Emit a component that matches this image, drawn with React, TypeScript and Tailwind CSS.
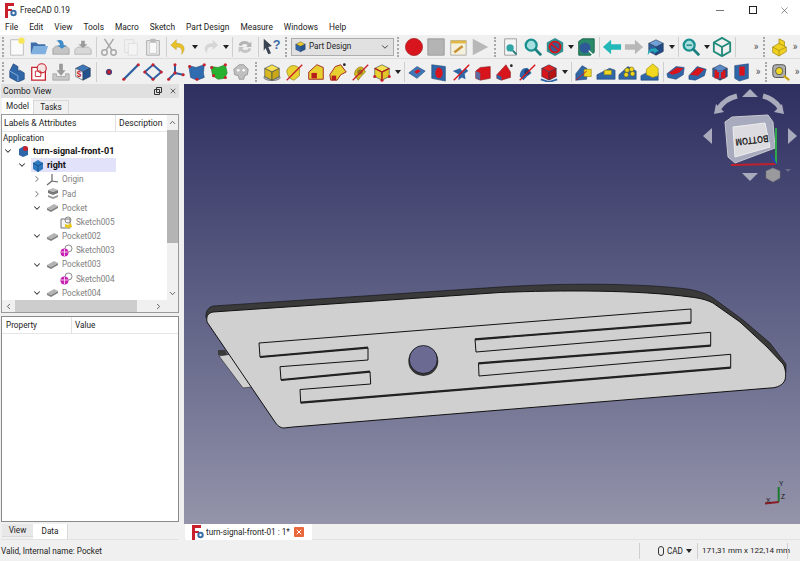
import React from "react";
import { ChevronDown, ChevronLeft, ChevronRight, ChevronUp, X } from "lucide-react";

type Kids = { children?: React.ReactNode };

const Ico = ({ children }: Kids) => (
  <div className="flex h-[22px] w-[22px] shrink-0 items-center justify-center">
    <svg width="20" height="20" viewBox="0 0 22 22">
      {children}
    </svg>
  </div>
);

const Iso = ({ a, b, c }: { a: string; b: string; c: string }) => (
  <g stroke="#23334f" strokeWidth="0.6" strokeLinejoin="round">
    <polygon points="3,7 11,3 19,7 11,11" fill={a} />
    <polygon points="3,7 11,11 11,20 3,16" fill={b} />
    <polygon points="19,7 11,11 11,20 19,16" fill={c} />
  </g>
);

const Dots = ({ pts }: { pts: number[][] }) => (
  <>
    {pts.map(([x, y]) => (
      <circle key={`${x}-${y}`} cx={x} cy={y} r="1.7" fill="#c8202c" />
    ))}
  </>
);

const Drop = () => (
  <div className="flex h-[22px] w-[9px] shrink-0 items-center justify-center">
    <div className="h-0 w-0 border-x-[3px] border-t-[4px] border-x-transparent border-t-[#222]" />
  </div>
);

const Sep = () => <div className="mx-[1.5px] h-[20px] w-px shrink-0 bg-[#cfcfcf]" />;

const Handle = () => (
  <div className="mx-[3px] h-[20px] w-[3px] shrink-0 border-l-2 border-dotted border-[#a8a8a8]" />
);

const FirstHandle = () => (
  <div className="ml-[2px] mr-[2px] h-[20px] w-[2px] shrink-0 border-l-2 border-dotted border-[#a8a8a8]" />
);

const More = () => (
  <span className="flex w-[10px] shrink-0 justify-center text-[10px] leading-none text-[#555]">»</span>
);

const FcLogo = () => (
  <svg width="13" height="15" viewBox="0 0 13 15" className="shrink-0">
    <path d="M0 0h9v3H3v3h4v2H3v7H0z" fill="#c8202c" />
    <circle cx="8.5" cy="10" r="3.2" fill="#3a6ea5" />
    <circle cx="8.5" cy="10" r="1.2" fill="#fff" />
  </svg>
);

const Row1Left = () => (
  <>
    <Ico>
      <path d="M4 3h12l2 2v15H4z" fill="#fafafa" stroke="#bbb" />
      <circle cx="16" cy="4" r="3.5" fill="#f6e65a" />
    </Ico>
    <Ico>
      <path d="M2 6h6l2 2h8v10H2z" fill="#3f6ea8" />
      <path d="M5 10h16l-3 9H2z" fill="#7fb0e0" />
    </Ico>
    <Ico>
      <path d="M2 13l3-3h12l3 3v6H2z" fill="#c4c4c4" stroke="#888" strokeWidth=".6" />
      <path d="M6 4c6-2 8 1 8 5h3l-5 4-5-4h3c0-2-2-4-4-5z" fill="#3f8cc8" />
    </Ico>
    <Ico>
      <path d="M2 14l3-3h12l3 3v5H2z" fill="#d8d8d8" stroke="#999" strokeWidth=".6" />
      <path d="M9 4h4v4h3l-5 4-5-4h3z" fill="#9a9a9a" />
    </Ico>
    <Sep />
    <Ico>
      <g stroke="#a8a8a8" strokeWidth="1.6" fill="none">
        <path d="M6 2l8 12M16 2L8 14" />
        <circle cx="6" cy="17" r="3" />
        <circle cx="16" cy="17" r="3" />
      </g>
    </Ico>
    <Ico>
      <path d="M4 3h10v14H4z" fill="#f2f2f2" stroke="#ddd" />
      <path d="M8 7h10v13H8z" fill="#f4f4f4" stroke="#ddd" />
    </Ico>
    <Ico>
      <path d="M4 4h14v16H4z" fill="#e8e8e8" stroke="#aaa" />
      <path d="M7 6h8v12H7z" fill="#f8f8f8" stroke="#ccc" />
      <path d="M8 2h6v4H8z" fill="#bbb" />
    </Ico>
    <Sep />
    <Ico>
      <path d="M8 3L2 9l6 5v-3c5 0 7 2 6 8 5-6 3-12-6-12z" fill="#e8c028" stroke="#b89a20" strokeWidth=".5" />
    </Ico>
    <Drop />
    <Ico>
      <path d="M14 3l6 6-6 5v-3c-5 0-7 2-6 8-5-6-3-12 6-12z" fill="#d6d6d6" />
    </Ico>
    <Drop />
    <Sep />
    <Ico>
      <path d="M4 9c1-5 9-6 12-2l2-2v6h-6l2-2c-2-2-6-2-7 1z" fill="#b4b4b4" />
      <path d="M18 13c-1 5-9 6-12 2l-2 2v-6h6l-2 2c2 2 6 2 7-1z" fill="#c4c4c4" />
    </Ico>
    <Sep />
    <Ico>
      <path d="M3 2l9 8-4 1 3 7-3 1-3-7-2 3z" fill="#3a4452" />
      <text x="13" y="13" fontSize="14" fontWeight="700" fill="#3f6ea8" fontFamily="Liberation Sans">?</text>
    </Ico>
  </>
);

const Row1Mid = () => (
  <>
    <Ico>
      <circle cx="11" cy="11" r="9.5" fill="#d8141c" stroke="#8a1a1a" strokeWidth=".6" />
    </Ico>
    <Ico>
      <path d="M2 2h18v18H2z" fill="#b4b4b4" stroke="#999" />
    </Ico>
    <Ico>
      <path d="M3 4h17v16H3z" fill="#f4f0dc" stroke="#aaa" />
      <path d="M3 4h17v3H3z" fill="#e0b840" />
      <path d="M6 16l9-7 2 2-9 7z" fill="#c89030" />
    </Ico>
    <Ico>
      <path d="M3 2l17 9-17 9z" fill="#b8b8b8" />
    </Ico>
    <Handle />
    <Ico>
      <path d="M4 2h13v18H4z" fill="#f4f4f4" stroke="#999" />
      <circle cx="10" cy="12" r="4" fill="#2fa5a5" />
      <path d="M13 15l4 4" stroke="#1c7878" strokeWidth="2" />
    </Ico>
    <Ico>
      <circle cx="9" cy="9" r="6" fill="#a8e0e0" stroke="#1c9090" strokeWidth="2.5" />
      <path d="M13 13l7 7" stroke="#1c8080" strokeWidth="3" />
    </Ico>
    <Ico>
      <polygon points="11,1 20,6 20,16 11,21 2,16 2,6" fill="#2f8f8f" />
      <circle cx="11" cy="11" r="6" fill="#3a5a90" stroke="#d8141c" strokeWidth="2" />
      <path d="M6 7l10 8" stroke="#d8141c" strokeWidth="2" />
    </Ico>
    <Drop />
    <Ico>
      <path d="M3 5l4-3h13v15l-4 3H3z" fill="#2a8a6a" stroke="#156045" />
      <circle cx="10" cy="12" r="6" fill="#2f5a98" />
      <path d="M14 15l5 5" stroke="#fff" strokeWidth="1.5" />
    </Ico>
    <Sep />
    <Ico>
      <path d="M1 11l9-8v5h11v6H10v5z" fill="#22b8b8" />
    </Ico>
    <Ico>
      <path d="M21 11l-9-8v5H1v6h11v5z" fill="#b8b8b8" />
    </Ico>
    <Ico>
      <Iso a="#6fa0d8" b="#2f5f9f" c="#1f4a85" />
      <path d="M2 20c0-6 3-8 8-7l-1-2 5 4-5 3v-2c-3-1-5 0-7 4z" fill="#22a8b8" />
    </Ico>
    <Drop />
    <Sep />
    <Ico>
      <circle cx="9" cy="9" r="6" fill="#a8e0e0" stroke="#1c9090" strokeWidth="2.5" />
      <path d="M6 9h6" stroke="#1c8080" strokeWidth="1.5" />
      <path d="M13 13l7 7" stroke="#1c8080" strokeWidth="3" />
    </Ico>
    <Drop />
    <Ico>
      <g fill="none" stroke="#1f8a7a" strokeWidth="2" strokeLinejoin="round">
        <polygon points="11,1 20,6 20,16 11,21 2,16 2,6" />
        <path d="M2 6l9 5 9-5M11 11v10" />
      </g>
    </Ico>
    <Sep />
  </>
);

const Yellow = () => (
  <Ico>
    <path d="M4 11l7-4V2l6 3v5l2 1v5l-8 5-7-4z" fill="#f0d020" stroke="#a08a10" strokeWidth=".8" />
    <path d="M11 7l6 3M4 11l7 4v6M11 15l8-4" stroke="#a08a10" strokeWidth=".8" fill="none" />
  </Ico>
);

const Row2Left = () => (
  <>
    <Ico>
      <path d="M3 10l4-8 5 3v5l2-1 5 3v7l-7 3-9-5z" fill="#2f66a8" stroke="#1c3f70" strokeWidth=".7" />
      <path d="M3 10l9 5v6" stroke="#8cb4e0" fill="none" />
    </Ico>
    <Ico>
      <path d="M3 6h15v14H3z" fill="#fff" stroke="#c8202c" strokeWidth="1.4" />
      <circle cx="14" cy="7" r="5" fill="#f4e4e4" stroke="#c8202c" strokeWidth="1.2" />
      <path d="M7 10h6v6H7z" fill="none" stroke="#c8202c" />
    </Ico>
    <Ico>
      <path d="M2 13h4v3h10v-3h4v7H2z" fill="#c8c8c8" stroke="#888" strokeWidth=".6" />
      <path d="M9 2h4v7h3l-5 6-5-6h3z" fill="#9a9a9a" />
    </Ico>
    <Ico>
      <Iso a="#3f78b8" b="#f4f4f4" c="#24528f" />
      <text x="4" y="17" fontSize="9" fontWeight="700" fill="#c8202c" fontFamily="Liberation Sans">$</text>
    </Ico>
    <Sep />
    <Ico>
      <circle cx="11" cy="11" r="3" fill="#b0203a" stroke="#2b4a86" />
    </Ico>
    <Ico>
      <path d="M3 19L19 3" stroke="#2f5fa0" strokeWidth="2.5" />
      <Dots pts={[[3, 19], [19, 3]]} />
    </Ico>
    <Ico>
      <polygon points="11,3 20,11 11,19 2,11" fill="none" stroke="#2f5fa0" strokeWidth="2.2" />
      <Dots pts={[[11, 3], [20, 11], [11, 19], [2, 11]]} />
    </Ico>
    <Ico>
      <path d="M11 3v9M11 12l9 2M11 12l-7 7" stroke="#2f5fa0" strokeWidth="2.2" fill="none" />
      <Dots pts={[[11, 3], [20, 14], [4, 19], [11, 12]]} />
    </Ico>
    <Ico>
      <path d="M2 4l8 2 9-3-1 9 1 5-8 3-7-3z" fill="#2f6cb0" stroke="#1c3f70" strokeWidth=".6" />
      <Dots pts={[[3, 5], [19, 3], [11, 19]]} />
    </Ico>
    <Ico>
      <path d="M2 5l8 1 8-3 2 9-3 6-7 1-6-4z" fill="#28b030" stroke="#157018" strokeWidth=".6" />
      <Dots pts={[[3, 6], [18, 3], [5, 15], [18, 17]]} />
    </Ico>
    <Ico>
      <path d="M3 8l6-5h5l5 5-1 6-3 1-1 4H9l-1-4-4-1z" fill="#c0c0c0" stroke="#8a8a8a" strokeWidth=".8" />
      <circle cx="8" cy="9" r="1.4" fill="#fff" />
      <circle cx="14" cy="9" r="1.4" fill="#fff" />
    </Ico>
    <Handle />
  </>
);

const Row2Part = () => (
  <>
    <Ico>
      <ellipse cx="11" cy="17" rx="9" ry="3.5" fill="#a8a8a8" stroke="#555" strokeWidth=".6" />
      <Iso a="#f4e050" b="#d8b820" c="#c8a818" />
    </Ico>
    <Ico>
      <path d="M3 10c2-7 9-8 14-3v8l-6 5C6 19 4 15 3 10z" fill="#e8d030" stroke="#8a7a10" strokeWidth=".7" />
      <path d="M3 20L20 3" stroke="#c8202c" strokeWidth="1.5" />
    </Ico>
    <Ico>
      <path d="M3 11l9-8 7 3v13H3z" fill="#e8d030" stroke="#a02020" />
      <path d="M6 12h6v6H6z" fill="#b81c1c" />
    </Ico>
    <Ico>
      <path d="M2 14l6-9 6-2 6 8-6 3-4 6H3z" fill="#e8d030" stroke="#a02020" />
      <path d="M4 15h5v5H4z" fill="#b81c1c" />
      <circle cx="18" cy="3" r="1.5" fill="#222" />
    </Ico>
    <Ico>
      <path d="M5 14c0-6 5-10 9-8l3 5-5 5-3 4z" fill="#d8b820" stroke="#7a6a10" strokeWidth=".7" />
      <circle cx="11" cy="11" r="3" fill="#8a7a20" />
      <path d="M3 20L20 3" stroke="#c8202c" strokeWidth="1.5" />
    </Ico>
    <Ico>
      <Iso a="#f4e050" b="#e8d030" c="#e0c428" />
      <path d="M11 11v9M3 7l8 4 8-4" stroke="#b81c1c" strokeWidth="1.3" fill="none" />
      <Dots pts={[[3, 16], [19, 16], [11, 20]]} />
    </Ico>
    <Drop />
    <Sep />
    <Ico>
      <path d="M2 12l9-7 9 5-9 8z" fill="#3f78b8" stroke="#1c3f70" strokeWidth=".6" />
      <path d="M8 11l4-3 3 2-4 3z" fill="#d8141c" />
    </Ico>
    <Ico>
      <path d="M3 3l15 2v16L3 18z" fill="#2f66a8" stroke="#1c3f70" strokeWidth=".6" />
      <ellipse cx="11" cy="12" rx="4" ry="6" fill="#d8141c" />
    </Ico>
    <Ico>
      <path d="M2 10l8-3 3 4 3-4 3 3-4 3 1 6-4-2-4 3 1-6z" fill="#2f66a8" />
      <path d="M3 20L20 3" stroke="#d8141c" strokeWidth="1.5" />
    </Ico>
    <Ico>
      <path d="M3 10l5-4 11-1v13L8 20l-5-2z" fill="#d8141c" stroke="#802020" strokeWidth=".6" />
      <path d="M3 10l5 2v8l-5-2z" fill="#5a6aa0" />
    </Ico>
    <Ico>
      <path d="M2 14l10-11 5 8v6L7 20l-5-2z" fill="#d8141c" stroke="#802020" strokeWidth=".6" />
      <path d="M2 14l5 2v4l-5-2z" fill="#2f66a8" />
      <circle cx="18" cy="4" r="1.5" fill="#222" />
    </Ico>
    <Ico>
      <path d="M3 16c0-7 5-11 9-9l4 5-5 4-4 4z" fill="#2f66a8" />
      <circle cx="11" cy="11" r="3" fill="#1c3f70" />
      <path d="M3 20L20 3" stroke="#d8141c" strokeWidth="1.5" />
    </Ico>
    <Ico>
      <Iso a="#e02020" b="#d8141c" c="#b81414" />
      <path d="M2 19l9 3 9-3" stroke="#2f66a8" strokeWidth="2" fill="none" />
    </Ico>
    <Drop />
    <Sep />
    <Ico>
      <path d="M2 13l7-9 5 3v12l-12 1z" fill="#2f66a8" stroke="#1c3f70" strokeWidth=".6" />
      <path d="M11 8h8v8h-8z" fill="#f0d820" stroke="#8a7a10" strokeWidth=".6" />
      <path d="M2 20L14 10" stroke="#d8141c" />
    </Ico>
    <Ico>
      <path d="M1 14l14-7 6 2v10H1z" fill="#2f66a8" stroke="#1c3f70" strokeWidth=".6" />
      <path d="M9 9h8v5H9z" fill="#f0d820" stroke="#8a7a10" strokeWidth=".6" />
    </Ico>
    <Ico>
      <path d="M1 14l10-9 9 5v9H1z" fill="#2f66a8" stroke="#1c3f70" strokeWidth=".6" />
      <g fill="#f0d820" stroke="#6a5a10" strokeWidth=".6">
        <circle cx="10" cy="9" r="2.5" />
        <circle cx="15" cy="8" r="2.5" />
        <circle cx="16" cy="13" r="2.5" />
        <circle cx="9" cy="14" r="2.5" />
      </g>
    </Ico>
    <Ico>
      <path d="M1 15l8-4 11 1v8H1z" fill="#2f66a8" stroke="#1c3f70" strokeWidth=".6" />
      <path d="M7 8l7-6 6 5v8l-6 2-7-3z" fill="#f0d820" stroke="#8a7a10" strokeWidth=".6" />
    </Ico>
    <Sep />
    <Ico>
      <path d="M1 13l10-8 9 1-1 8-8 5-9-2z" fill="#2f66a8" stroke="#1c3f70" strokeWidth=".6" />
      <path d="M3 12l9-6 7 1-5 5-7 2z" fill="#d8141c" />
    </Ico>
    <Ico>
      <path d="M1 15l9-10 10 3-2 7-10 5-7-1z" fill="#2f66a8" stroke="#1c3f70" strokeWidth=".6" />
      <path d="M2 14l9-8 7 2-7 7z" fill="#d8141c" />
    </Ico>
    <Ico>
      <Iso a="#5a8ac8" b="#2f66a8" c="#24528f" />
      <path d="M5 9h12v9H5z" fill="#d8141c" />
      <path d="M8 9h6v2h-2v7h-2v-7H8z" fill="#3f78b8" />
    </Ico>
    <Ico>
      <path d="M3 4l15-2v16L8 21l-5-3z" fill="#2f66a8" stroke="#1c3f70" strokeWidth=".6" />
      <path d="M8 5h6v10H8z" fill="#d8141c" />
    </Ico>
  </>
);

const Measure = () => (
  <Ico>
    <rect x="2" y="3" width="14" height="14" rx="3" fill="#b0b0b0" stroke="#444" />
    <circle cx="9" cy="10" r="4" fill="#f0d820" stroke="#555" />
    <path d="M14 15l6 5" stroke="#c8a818" strokeWidth="2.5" />
  </Ico>
);

const Toolbar = ({ left, right }: { left: React.ReactNode; right: React.ReactNode }) => (
  <div className="flex items-center justify-between overflow-hidden bg-[#f0f0f0]">
    <div className="flex items-center">{left}</div>
    <div className="flex items-center">{right}</div>
  </div>
);

const RightEnd = ({ children }: Kids) => (
  <>
    <More />
    <div className="mx-[2px] h-[20px] w-[3px] shrink-0 border-l-2 border-dotted border-[#a8a8a8]" />
    {children}
    <More />
  </>
);

const tree = [
  { label: "Application", pad: 1, head: true },
  { label: "turn-signal-front-01", pad: 1, caret: "down", icon: "doc", bold: true },
  { label: "right", pad: 15, caret: "down", icon: "body", bold: true, selected: true },
  { label: "Origin", pad: 30, caret: "right", icon: "origin" },
  { label: "Pad", pad: 30, caret: "right", icon: "pad" },
  { label: "Pocket", pad: 30, caret: "down", icon: "pocket" },
  { label: "Sketch005", pad: 44, icon: "lock" },
  { label: "Pocket002", pad: 30, caret: "down", icon: "pocket" },
  { label: "Sketch003", pad: 44, icon: "pink" },
  { label: "Pocket003", pad: 30, caret: "down", icon: "pocket" },
  { label: "Sketch004", pad: 44, icon: "pink" },
  { label: "Pocket004", pad: 30, caret: "down", icon: "pocket" },
];

const TreeIcon = ({ name }: { name?: string }) => {
  if (!name) return null;
  return (
    <svg width="13" height="13" viewBox="0 0 13 13" className="mr-[3px] shrink-0">
      {name === "doc" && (
        <>
          <path d="M2 4l5-3 4 2v7l-5 2-4-2z" fill="#2f66a8" />
          <circle cx="8.5" cy="3.5" r="2.5" fill="#c8202c" />
        </>
      )}
      {name === "body" && (
        <>
          <path d="M2 4l5-3 5 3v6l-5 3-5-3z" fill="#2f78c0" />
          <path d="M2 4l5 3 5-3M7 7v6" stroke="#154c8a" fill="none" />
        </>
      )}
      {name === "origin" && (
        <path d="M6 1v7M6 8l6 1M6 8l-5 4" stroke="#666" strokeWidth="1.2" fill="none" />
      )}
      {name === "pad" && (
        <>
          <path d="M2 3l5-2 5 2-5 2z" fill="#bbb" />
          <path d="M2 3l5 2v3L2 6zM12 3L7 5v3l5-2z" fill="#777" />
          <path d="M2 8l5 2 5-2v2l-5 2-5-2z" fill="#999" />
        </>
      )}
      {name === "pocket" && (
        <>
          <path d="M1 7l7-4 4 2-7 4z" fill="#b4b4b4" />
          <path d="M1 7l4 2v2L1 9zM12 5L5 9v2l7-4z" fill="#808080" />
        </>
      )}
      {name === "lock" && (
        <>
          <path d="M1 3h9v9H1z" fill="#f4f4f4" stroke="#777" />
          <circle cx="8" cy="4" r="3" fill="none" stroke="#888" />
          <path d="M5 8l3 1 3-2 1 4-4 1-3-1z" fill="#e8c818" />
        </>
      )}
      {name === "pink" && (
        <>
          <circle cx="8.5" cy="4.5" r="3.5" fill="#fff" stroke="#888" />
          <circle cx="4.5" cy="8.5" r="4" fill="#c820b0" />
          <path d="M1 8h7M4.5 5v7" stroke="#fff" strokeWidth=".7" />
        </>
      )}
    </svg>
  );
};

const ViewportArt = () => (
  <svg className="absolute inset-0 h-full w-full" viewBox="184 84 616 440">
    {/* tab poking out behind the plate */}
    <polygon points="218,350 218,355 228,356 225,350" fill="#3b3b3b" />
    <polygon points="219,356 243,388 252,387 232,354" fill="#cfcfcf" stroke="#222" strokeWidth=".6" />
    {/* top thickness */}
    <path
      d="M206 318 C205 311 209 307 213 306 L500 287 C560 283 640 283 687 289 C700 291 707 294 713 298 L743 320 L770 343 L786 364 L786 372 L700 310 L212 320 Z"
      fill="#3a3a3a"
      stroke="#111"
      strokeWidth=".6"
    />
    {/* plate */}
    <path
      d="M207 322 C206 316 208 313 213 312 L500 292.5 C560 290 640 290 690 297 C700 298 707 300 713 303 L740 322 L767 347 L783 364 C786 369 786 376 785 380 C783 385 777 388 770 388 L293 427 L284 428 C280 428 277 425 275 422 Z"
      fill="#d0d0d0"
      stroke="#111"
      strokeWidth="1"
    />
    {/* slots are one closed serpentine */}
    <polygon
      points="691,309 259,343 260,357 368,347.7 368,360 280,366.7 281,380 370,371.7 370.7,384 300,389.5 300.7,402.7 730.7,367.7 730.7,354.3 479,376 478.5,363.3 710.7,345.7 710.7,332.3 476,352 475,339.3 691,322.7"
      fill="#d0d0d0"
      stroke="#111"
      strokeWidth="1"
    />
    <g stroke="#222" strokeWidth="2.2">
      <line x1="260" y1="357" x2="368" y2="347.7" />
      <line x1="281" y1="380" x2="370" y2="371.7" />
      <line x1="300.7" y1="402.7" x2="730.7" y2="367.7" />
      <line x1="478.5" y1="363.3" x2="710.7" y2="345.7" />
      <line x1="475" y1="339.3" x2="691" y2="322.7" />
    </g>
    {/* hole */}
    <circle cx="423.3" cy="361" r="15" fill="#333" />
    <circle cx="423.3" cy="359.5" r="14" fill="#6a6a92" stroke="#111" strokeWidth=".8" />

    {/* nav cube */}
    <g fill="#a9abbd">
      <polygon points="750,89 742,97 758,97" />
      <polygon points="703,136 712,128 712,144" />
      <polygon points="797,136 788,128 788,144" />
      <polygon points="742,173 758,173 750,181" />
      <polygon points="714,114 724,112 716,104" />
      <polygon points="784,114 774,112 782,104" />
    </g>
    <g fill="none" stroke="#a9abbd" strokeWidth="5">
      <path d="M719 108 C723 102 729 98 737 96" />
      <path d="M763 96 C771 98 776 102 780 108" />
    </g>
    <polygon points="725,122 732,117 768,115 773,122 775,148 735,163 728,157" fill="#a8aabe" stroke="#c8c8d0" strokeWidth="1" strokeLinejoin="round" />
    <polygon points="733,127 765,123 770,147 735,157" fill="#dcdce0" stroke="#eee" strokeWidth="1" />
    <text
      transform="translate(768,135) rotate(173)"
      fontSize="10"
      fontWeight="700"
      fill="#222"
      textLength="33"
      lengthAdjust="spacingAndGlyphs"
      fontFamily="Liberation Sans, sans-serif"
    >
      BOTTOM
    </text>
    <line x1="776" y1="128" x2="776" y2="164" stroke="#2aa84a" strokeWidth="2" />
    <line x1="731" y1="165" x2="776" y2="164" stroke="#c0202c" strokeWidth="2" />
    <line x1="771" y1="155" x2="776" y2="164" stroke="#2040c0" strokeWidth="1.5" />
    <polygon points="766,171 773,168 780,171 780,178 773,182 766,178" fill="#9a9a9e" stroke="#777" strokeWidth=".5" />
    <polygon points="785,169 791,169 788,172" fill="#6a6a88" />

    {/* corner axes */}
    <line x1="778.7" y1="502" x2="778.7" y2="487" stroke="#1c7a30" strokeWidth="2" />
    <line x1="778.7" y1="502" x2="765" y2="503.5" stroke="#8a1c24" strokeWidth="2" />
    <g fontSize="6.5" fill="#111" fontFamily="Liberation Sans, sans-serif">
      <text x="779" y="486">Y</text>
      <text x="781" y="499">Z</text>
      <text x="766" y="503">X</text>
    </g>
  </svg>
);

export default function App() {
  return (
    <div className="flex h-[561px] w-[800px] flex-col overflow-hidden bg-[#f0f0f0] text-[8.2px] leading-none text-[#222] [font-family:Roboto,sans-serif]">
      {/* title bar */}
      <div className="flex h-[20px] shrink-0 items-center bg-white pl-[5px]">
        <FcLogo />
        <span className="ml-[2px]">FreeCAD 0.19</span>
        <div className="ml-auto flex items-center text-[#333]">
          <div className="flex w-[33px] justify-center">
            <div className="h-px w-[8px] bg-[#777]" />
          </div>
          <div className="flex w-[33px] justify-center">
            <div className="h-[8px] w-[8px] border border-[#222]" />
          </div>
          <div className="flex w-[31px] justify-center">
            <X size={11} strokeWidth={1.2} />
          </div>
        </div>
      </div>
      {/* menu */}
      <div className="flex h-[15px] shrink-0 items-center gap-[11px] bg-white pl-[5px] text-[8.4px]">
        {["File", "Edit", "View", "Tools", "Macro", "Sketch", "Part Design", "Measure", "Windows", "Help"].map((m) => (
          <span key={m}>{m}</span>
        ))}
      </div>
      {/* toolbars */}
      <div className="flex h-[24px] shrink-0 flex-col justify-center border-b border-[#dcdcdc] bg-[#f0f0f0]">
        <Toolbar
          left={
            <>
              <FirstHandle />
              <Row1Left />
              <Handle />
              <div className="flex h-[18px] w-[103px] shrink-0 items-center gap-[2px] border border-[#adadad] bg-[#e1e1e1] pl-[2px]">
                <svg width="13" height="13" viewBox="0 0 22 22">
                  <Iso a="#e8c828" b="#2f66a8" c="#24528f" />
                </svg>
                <span>Part Design</span>
                <ChevronDown size={10} className="ml-auto mr-[3px]" />
              </div>
              <Handle />
              <Row1Mid />
            </>
          }
          right={
            <RightEnd>
              <Yellow />
            </RightEnd>
          }
        />
      </div>
      <div className="flex h-[25px] shrink-0 flex-col justify-center bg-[#f0f0f0]">
        <Toolbar
          left={
            <>
              <FirstHandle />
              <Row2Left />
              <Row2Part />
            </>
          }
          right={
            <RightEnd>
              <Measure />
            </RightEnd>
          }
        />
      </div>

      {/* main area */}
      <div className="flex min-h-0 flex-1">
        {/* combo view */}
        <div className="flex w-[184px] shrink-0 flex-col pl-px pr-[5px]">
          <div className="flex h-[14px] shrink-0 items-center bg-[#e0e0e0] pl-[2px] pr-[2px] text-[8.6px]">
            <span>Combo View</span>
            <svg width="8" height="8" viewBox="0 0 8 8" className="ml-auto mr-[7px]">
              <path d="M2.5.5h5v5h-5zM.5 2.5h5v5h-5z" fill="#e0e0e0" stroke="#333" />
            </svg>
            <X size={8} strokeWidth={2} />
          </div>
          <div className="flex h-[16px] shrink-0 items-end pl-[1px]">
            <div className="flex h-[16px] w-[31px] items-center justify-center bg-white">Model</div>
            <div className="flex h-[14px] w-[36px] items-center justify-center border border-b-0 border-[#d9d9d9] bg-[#f0f0f0]">
              Tasks
            </div>
          </div>
          {/* tree */}
          <div className="flex h-[199px] shrink-0 flex-col border border-[#9a9a9a] bg-white">
            <div className="flex min-h-0 flex-1">
              <div className="flex min-w-0 flex-1 flex-col">
                <div className="flex h-[17px] shrink-0 items-center border-b border-[#e6e6e6] text-[8.6px]">
                  <span className="w-[114px] border-r border-[#e0e0e0] pl-[2px] leading-[16px]">Labels &amp; Attributes</span>
                  <span className="pl-[3px]">Description</span>
                </div>
                <div className="flex flex-col overflow-hidden">
                  {tree.map((r) => (
                    <div
                      key={r.label}
                      className={`flex shrink-0 items-center ${r.head ? "h-[12px]" : "h-[14.2px]"}`}
                      style={{ paddingLeft: r.pad }}
                    >
                      {r.caret === "down" && <ChevronDown size={10} strokeWidth={2.5} className="mr-[4px] shrink-0 text-[#333]" />}
                      {r.caret === "right" && <ChevronRight size={10} strokeWidth={2.5} className="mr-[4px] shrink-0 text-[#888]" />}
                      {!r.caret && !r.head && <div className="w-[14px] shrink-0" />}
                      <div className={`flex h-full items-center ${r.selected ? "w-[85px] bg-[#e2e2fa]" : ""}`}>
                        <TreeIcon name={r.icon} />
                        <span className={r.bold ? "text-[9px] font-bold text-[#111]" : r.head ? "text-[#222]" : "text-[#808080]"}>
                          {r.label}
                        </span>
                      </div>
                    </div>
                  ))}
                </div>
              </div>
              <div className="flex w-[11px] shrink-0 flex-col items-center bg-[#f0f0f0]">
                <ChevronUp size={9} className="my-[3px] text-[#333]" />
                <div className="h-[113px] w-full bg-[#b4b4b4]" />
                <ChevronDown size={9} className="mt-auto mb-[2px] text-[#333]" />
              </div>
            </div>
            <div className="flex h-[12px] shrink-0 items-center bg-[#f0f0f0]">
              <ChevronLeft size={9} className="mx-[2px] shrink-0 text-[#333]" />
              <div className="h-full w-[122px] bg-[#cdcdcd]" />
              <ChevronRight size={9} className="ml-[17px] shrink-0 text-[#333]" />
            </div>
          </div>
          {/* property view */}
          <div className="mt-[3px] flex h-[206px] shrink-0 flex-col border border-[#8a8a8a] bg-white">
            <div className="flex h-[17px] items-center border-b border-[#e6e6e6]">
              <span className="w-[70px] border-r border-[#e0e0e0] pl-[4px] leading-[16px]">Property</span>
              <span className="pl-[3px]">Value</span>
            </div>
          </div>
          <div className="flex h-[18px] shrink-0 items-start border-b border-[#e2e2e2] pl-px pt-[2px]">
            <div className="flex h-[13px] w-[31px] items-center justify-center border-b border-[#d9d9d9] bg-[#e8e8e8]">View</div>
            <div className="flex h-[15px] w-[35px] items-center justify-center border-r border-[#d9d9d9] bg-white">Data</div>
          </div>
        </div>

        {/* 3D view */}
        <div className="flex min-w-0 flex-1 flex-col">
          <div className="relative h-[440px] shrink-0 overflow-hidden bg-gradient-to-b from-[#2f2f60] to-[#9494aa]">
            <ViewportArt />
          </div>
          <div className="flex h-[16px] shrink-0 items-start border-b border-[#e2e2e2]">
            <div className="ml-[1px] flex h-[16px] w-[127px] items-center gap-[1px] bg-white pl-[7px]">
              <FcLogo />
              <span className="whitespace-nowrap">turn-signal-front-01 : 1*</span>
              <span className="ml-[3px] flex h-[10px] w-[10px] items-center justify-center rounded-[1px] bg-[#e8683c] text-white">
                <X size={8} strokeWidth={3} />
              </span>
            </div>
          </div>
        </div>
      </div>

      {/* status bar */}
      <div className="flex h-[21px] shrink-0 items-center pt-px">
        <span className="pl-px">Valid, Internal name: Pocket</span>
        <div className="ml-auto flex h-full items-center">
          <div className="h-[16px] w-px bg-[#cfcfcf]" />
          <div className="ml-[18px] h-[10px] w-[6px] rounded-[3px] border border-[#333]" />
          <span className="ml-[3px]">CAD</span>
          <div className="ml-[3px] h-0 w-0 border-x-[3px] border-t-[4px] border-x-transparent border-t-[#222]" />
          <div className="ml-[5px] h-[16px] w-px bg-[#cfcfcf]" />
          <span className="ml-[4px] w-[85px] whitespace-nowrap text-[8px]">171,31 mm x 122,14 mm</span>
          <div className="h-[16px] w-px bg-[#cfcfcf]" />
          <div className="w-[12px]" />
        </div>
      </div>
    </div>
  );
}
